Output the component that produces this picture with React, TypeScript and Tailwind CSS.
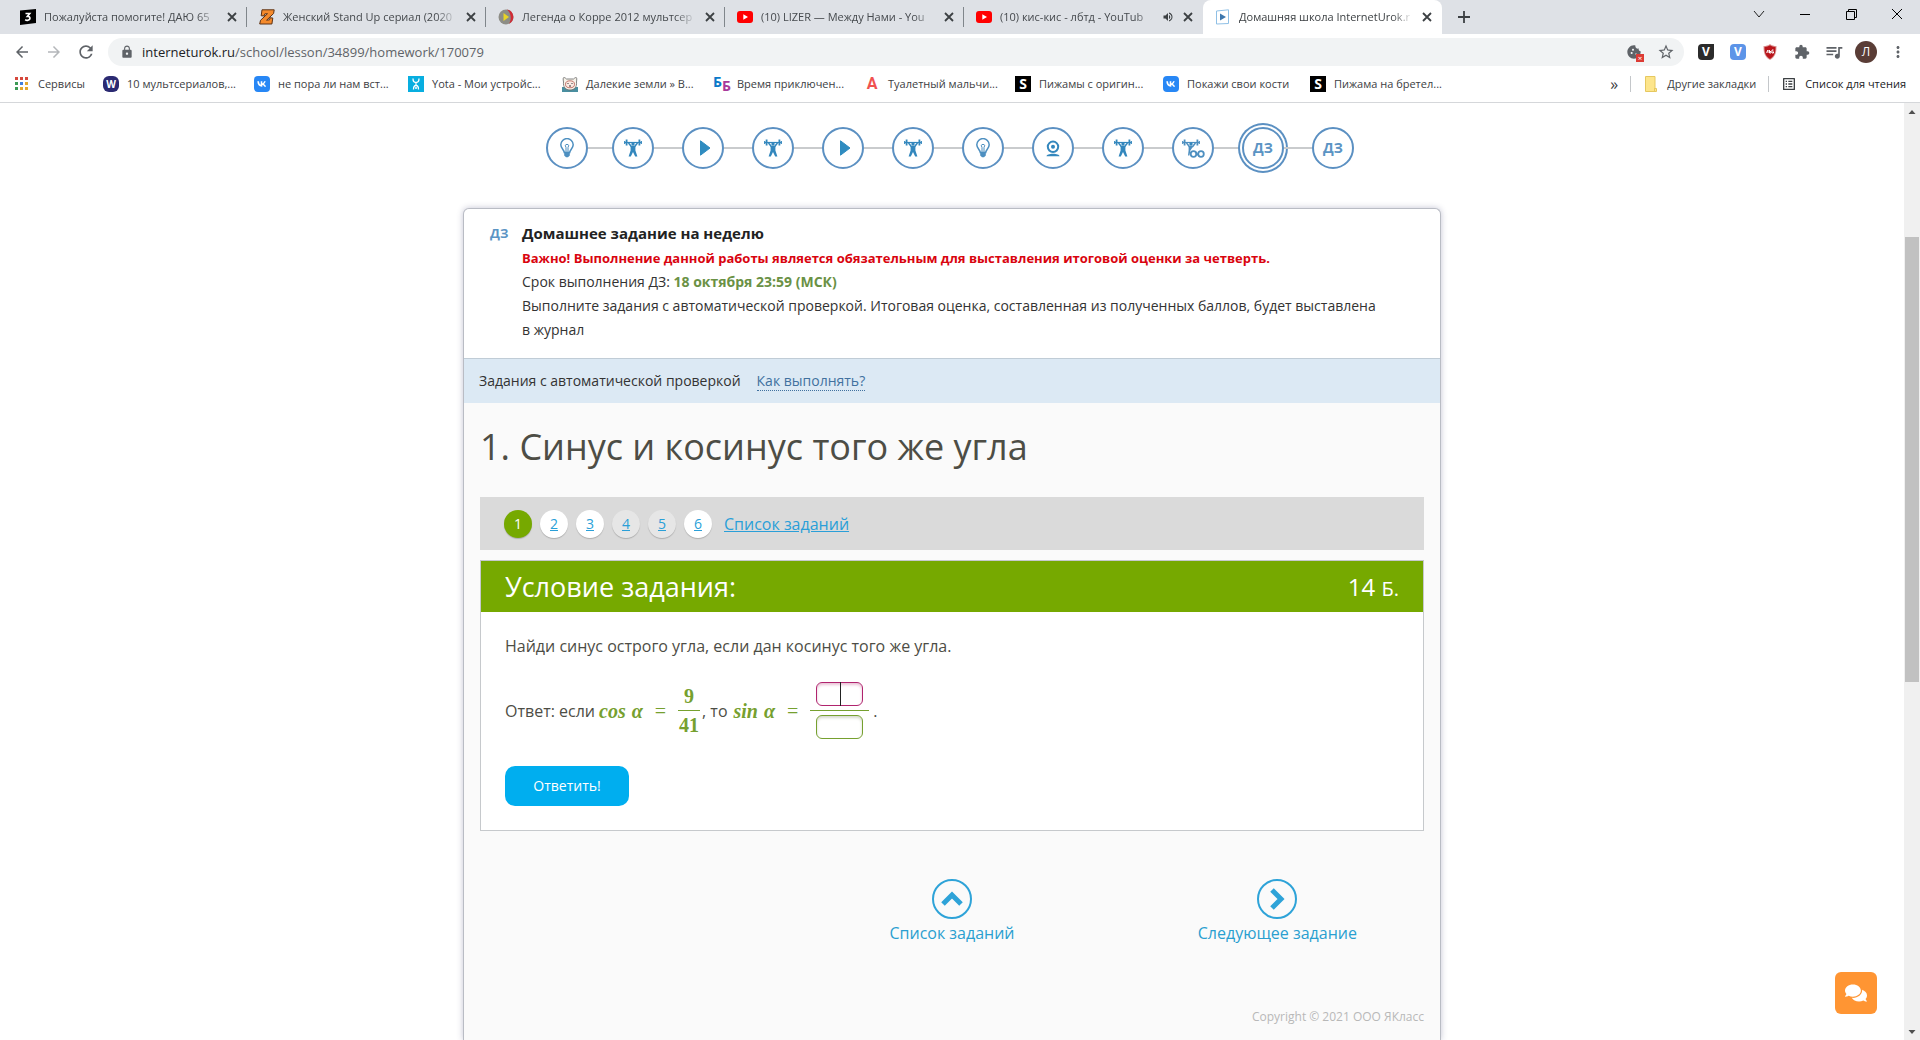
import type { ReactNode } from 'react'
import clsx from 'clsx'
import { FaComments } from 'react-icons/fa'
import {
  MdArrowBack,
  MdArrowForward,
  MdCookie,
  MdExtension,
  MdLock,
  MdMoreVert,
  MdOutlineListAlt,
  MdQueueMusic,
  MdRefresh,
  MdStarBorder,
  MdVolumeUp,
} from 'react-icons/md'

interface Tab {
  title: string
  icon: ReactNode
  active?: boolean
  audible?: boolean
}

interface Bookmark {
  title: string
  icon: ReactNode
  width: string
}

type StepKind = 'bulb' | 'train' | 'play' | 'webcam' | 'trainExtra' | 'homework'

/* ---------- favicons ---------- */

function YoutubeIcon() {
  return (
    <svg viewBox="0 0 16 16" className="size-4">
      <rect y="2" width="16" height="12" rx="3" fill="#f00" />
      <path d="M6.3 5.3 11 8l-4.7 2.7z" fill="#fff" />
    </svg>
  )
}

function ZnanijaIcon() {
  return (
    <svg viewBox="0 0 16 16" className="size-4">
      <path d="M0 1.500 16 0v14L0 16z" fill="#000" />
      <path d="M5.500 4.500h4.200L7.500 7.300c3.300-.3 3.200 4.200-.2 4-1 0-1.600-.3-2.100-.7" fill="none" stroke="#fff" strokeWidth="1.700" />
    </svg>
  )
}

function ZetIcon() {
  return (
    <svg viewBox="0 0 16 16" className="size-4">
      <path d="M3 .8h12.200l-.6 3.700-7 6.700 3-.4.400-2 2.800.2-.9 6H.7l.8-3.700 7-6.600-2.700.2-.6 2-3-.1z" fill="#f58a2c" stroke="#5c3216" />
    </svg>
  )
}

function KorraIcon() {
  return (
    <svg viewBox="0 0 16 16" className="size-4">
      <circle cx="8" cy="8" r="7.500" fill="#8d8d86" />
      <path d="M9 .6a7.500 7.500 0 0 1 2 14.200C14 10 13 4 9 .6z" fill="#d12b35" />
      <path d="M5.500 4 11 8l-5.500 4z" fill="#e8d425" />
    </svg>
  )
}

function UrokIcon() {
  return (
    <svg viewBox="0 0 16 16" className="size-4">
      <path d="m1.500 2 12-1.200v13.700L1.500 15z" fill="#fff" stroke="#8fc0e6" />
      <path d="M5 4.500 11 8l-6 3.500z" fill="#3d77ad" />
    </svg>
  )
}

function AppsIcon() {
  const colors = ['#d6483c', '#d6483c', '#d6483c', '#3c9a55', '#3f7fe0', '#e3a72f', '#3c9a55', '#e3a72f', '#e3a72f']
  return (
    <svg viewBox="0 0 16 16" className="size-4">
      {colors.map((fill, i) => (
        <rect key={i} x={1 + (i % 3) * 5} y={1 + Math.floor(i / 3) * 5} width="3" height="3" fill={fill} />
      ))}
    </svg>
  )
}

function VkIcon() {
  return (
    <svg viewBox="0 0 16 16" className="size-4">
      <rect width="16" height="16" rx="4" fill="#2787f5" />
      <path
        d="M2.800 5.200h1.700c.1 2 .9 3.200 1.700 3.500V5.200h1.600v2.100c.8-.1 1.500-1.100 1.800-2.100h1.600c-.3 1.200-1 2.100-1.800 2.600.9.400 1.700 1.300 2.200 2.800H9.900c-.4-1-1.100-1.700-2.100-1.800v1.800c-3 .2-4.900-1.700-5-5.400z"
        fill="#fff"
        transform="translate(.5 .1)"
      />
    </svg>
  )
}

function YotaIcon() {
  return (
    <svg viewBox="0 0 16 16" className="size-4">
      <rect width="16" height="16" fill="#08aee0" />
      <path d="M5 2.500c0 3 1 4 3 4s3-1 3-4M8 6.500v3M5.500 13.500c0-2.500 1-4 2.500-4s2.500 1.500 2.500 4" fill="none" stroke="#fff" strokeWidth="1.300" />
      <circle cx="8" cy="12" r="1" fill="#fff" />
    </svg>
  )
}

function FarLandsIcon() {
  return (
    <svg viewBox="0 0 16 16" className="size-4">
      <rect y="11" width="16" height="5" fill="#4a8fa0" />
      <path d="M1.500 6C1 3 1 1.500 2 1.500S4.500 3 4.500 3h7s1.500-1.500 2.500-1.500.8 1.500.5 4.500c.5 5-2 8-6.500 8s-7-3-6.500-8z" fill="#f7f3ea" stroke="#666" strokeWidth=".8" />
      <ellipse cx="8" cy="8.300" rx="4.500" ry="3.500" fill="#fbe9e2" stroke="#b5584c" strokeWidth=".8" />
      <path d="M5.500 7.500h1M9.500 7.500h1M7 10h2" stroke="#333" />
    </svg>
  )
}

function BbIcon() {
  return (
    <span className="flex size-4 text-sm leading-3 font-bold">
      <span className="text-[#0a79c9]">Б</span>
      <span className="pt-1 text-[#a83a9a]">Б</span>
    </span>
  )
}

function LetterIcon({ children, className }: { children: string; className: string }) {
  return (
    <span className={clsx('flex size-4 items-center justify-center leading-4', className)}>{children}</span>
  )
}

function FolderIcon() {
  return (
    <svg viewBox="0 0 16 16" className="size-4">
      <path d="M2.500.5h9.500v12h1.500v3h-11z" fill="#fde58b" stroke="#e6c860" />
      <path d="M11.500 12v3.500" stroke="#e6c860" />
    </svg>
  )
}

function ShieldIcon() {
  return (
    <svg viewBox="0 0 16 16" className="size-4">
      <path d="M8 0c2 1.500 4 2 6.500 2 0 6-.5 10.500-6.500 14C2 12.500 1.500 8 1.500 2 4 2 6 1.500 8 0z" fill="#dc9a98" />
      <path d="M8 1.200c1.700 1.200 3.500 1.700 5.500 1.700 0 5.300-.6 9-5.500 12-4.900-3-5.500-6.700-5.500-12 2 0 3.800-.5 5.500-1.700z" fill="#b9151b" />
      <path d="M4.500 8.700 6 6v3M7.500 6v3h1.500V7.500H7.500M11.500 6H10v3h1.500V7.500" fill="none" stroke="#fff" />
    </svg>
  )
}

/* ---------- lesson step icons ---------- */

function BulbIcon() {
  return (
    <svg viewBox="0 0 20 20" className="size-5" fill="none" stroke="#4d8fc0">
      <path d="M7.300 14.500C7.200 11.800 3.800 10.300 3.800 6.800a6.200 6.200 0 0 1 12.400 0c0 3.500-3.400 5-3.500 7.700z" strokeWidth="1.500" />
      <path d="M9 14V9.500L8.200 7.300 10 6.200l1.800 1.100-.8 2.200V14" />
      <path d="M7.200 14.500h5.600v3L11 19.300H9l-1.800-1.800z" fill="#4d8fc0" stroke="none" />
    </svg>
  )
}

function LifterShape() {
  return (
    <>
      <path d="M1.500 4.500h17" strokeWidth="1.200" />
      <path d="M3.600 1.500v6M16.400 1.500v6" strokeWidth="1.800" />
      <path d="M1.700 3v3M18.300 3v3" strokeWidth="1.200" />
      <path d="m5.500 5 2.800 3.500h3.400L14.500 5" strokeWidth="1.500" />
      <circle cx="10" cy="6" r="1.700" fill="#3387bd" stroke="none" />
    </>
  )
}

function TrainIcon() {
  return (
    <svg viewBox="0 0 20 20" className="size-5" fill="none" stroke="#3387bd">
      <LifterShape />
      <path d="M7.600 8h4.800v4.500l2 6h-2.200L10 14l-2.200 4.500H5.600l2-6z" fill="#3387bd" stroke="none" />
    </svg>
  )
}

function TrainExtraIcon() {
  return (
    <svg viewBox="0 0 24 20" className="h-5 w-6" fill="none" stroke="#4d8fc0">
      <LifterShape />
      <path d="M7.600 8h4.800l-3 4.500-1 5H7l.6-5z" fill="#4d8fc0" stroke="none" />
      <circle cx="12.500" cy="16" r="2.800" strokeWidth="1.800" />
      <circle cx="20" cy="16" r="2.800" strokeWidth="1.800" />
      <path d="m14.500 14 3.500 4" strokeWidth="1.500" />
    </svg>
  )
}

function PlayIcon() {
  return (
    <svg viewBox="0 0 20 20" className="size-5">
      <path d="M7.500 2.800v14.400L17 10z" fill="#2f8cc0" stroke="#2f8cc0" strokeLinejoin="round" />
    </svg>
  )
}

function WebcamIcon() {
  return (
    <svg viewBox="0 0 20 20" className="size-5" fill="none" stroke="#3387bd">
      <circle cx="10" cy="8.800" r="5.200" strokeWidth="2" />
      <circle cx="10" cy="8.800" r="2" fill="#3387bd" stroke="none" />
      <path d="M3.500 18.300c0-1.600 3-2.600 6.500-2.600s6.500 1 6.500 2.600z" fill="#3387bd" stroke="none" />
    </svg>
  )
}

const stepIcons: Record<StepKind, ReactNode> = {
  bulb: <BulbIcon />,
  train: <TrainIcon />,
  play: <PlayIcon />,
  webcam: <WebcamIcon />,
  trainExtra: <TrainExtraIcon />,
  homework: 'ДЗ',
}

/* ---------- data ---------- */

const tabs: Tab[] = [
  { title: 'Пожалуйста помогите! ДАЮ 65', icon: <ZnanijaIcon /> },
  { title: 'Женский Stand Up сериал (2020', icon: <ZetIcon /> },
  { title: 'Легенда о Корре 2012 мультсер', icon: <KorraIcon /> },
  { title: '(10) LIZER — Между Нами - You', icon: <YoutubeIcon /> },
  { title: '(10) кис-кис - лбтд - YouTub', icon: <YoutubeIcon />, audible: true },
  { title: 'Домашняя школа InternetUrok.r', icon: <UrokIcon />, active: true },
]

const bookmarks: Bookmark[] = [
  { title: 'Сервисы', icon: <AppsIcon />, width: 'w-[89px]' },
  { title: '10 мультсериалов,...', icon: <LetterIcon className="rounded-md bg-[#2b2a72] text-[10px] font-bold text-white">W</LetterIcon>, width: 'w-[151px]' },
  { title: 'не пора ли нам вст...', icon: <VkIcon />, width: 'w-[154px]' },
  { title: 'Yota - Мои устройс...', icon: <YotaIcon />, width: 'w-[154px]' },
  { title: 'Далекие земли » В...', icon: <FarLandsIcon />, width: 'w-[151px]' },
  { title: 'Время приключен...', icon: <BbIcon />, width: 'w-[151px]' },
  { title: 'Туалетный мальчи...', icon: <LetterIcon className="font-[Roboto,sans-serif] text-base font-bold text-[#f0524f]">A</LetterIcon>, width: 'w-[151px]' },
  { title: 'Пижамы с оригин...', icon: <LetterIcon className="bg-black text-sm font-bold text-white">S</LetterIcon>, width: 'w-[148px]' },
  { title: 'Покажи свои кости', icon: <VkIcon />, width: 'w-[147px]' },
  { title: 'Пижама на бретел...', icon: <LetterIcon className="bg-black text-sm font-bold text-white">S</LetterIcon>, width: 'w-[151px]' },
]

const steps: StepKind[] = [
  'bulb', 'train', 'play', 'train', 'play', 'train',
  'bulb', 'webcam', 'train', 'trainExtra', 'homework', 'homework',
]
const currentStep = 10

const tasks = [
  { id: 1, style: 'bg-[#76a900] text-white' },
  { id: 2, style: 'bg-white text-[#2a9fd8] underline' },
  { id: 3, style: 'bg-white text-[#2a9fd8] underline' },
  { id: 4, style: 'bg-[#e6e6e6] text-[#2a9fd8] underline' },
  { id: 5, style: 'bg-[#e6e6e6] text-[#2a9fd8] underline' },
  { id: 6, style: 'bg-white text-[#2a9fd8] underline' },
]

/* ---------- browser chrome ---------- */

function TabStrip() {
  return (
    <div className="flex h-[34px] bg-[#dee1e6] pl-2">
      {tabs.map((tab, i) => (
        <div
          key={tab.title}
          className={clsx(
            'flex w-[239px] items-center pl-3',
            tab.active && 'rounded-t-lg bg-white text-[#3c4043]'
          )}
        >
          {tab.icon}
          <span className="ml-2 flex-1 text-[11px] whitespace-nowrap [mask-image:linear-gradient(to_right,black_88%,transparent)]">
            {tab.title}
          </span>
          {tab.audible && <MdVolumeUp className="ml-2 size-3 text-[#3c4043]" />}
          <button type="button" aria-label="Закрыть вкладку" className="mx-1.5 flex size-4 items-center justify-center">
            <svg viewBox="0 0 10 10" className="size-2.5" stroke="#3c4043" strokeWidth="1.800">
              <path d="m1 1 8 8M9 1 1 9" />
            </svg>
          </button>
          <span className={clsx('h-5 w-px', i < 4 && 'bg-[#80868b]')} />
        </div>
      ))}
      <button type="button" aria-label="Новая вкладка" className="ml-2 flex w-7 items-center justify-center">
        <svg viewBox="0 0 12 12" className="size-3" stroke="#3c4043" strokeWidth="1.800">
          <path d="M6 0v12M0 6h12" />
        </svg>
      </button>
      <div className="ml-auto flex h-7">
        <button type="button" aria-label="Поиск вкладок" className="flex w-[46px] items-center justify-center">
          <svg viewBox="0 0 12 12" className="size-3" fill="none" stroke="#222">
            <path d="m1 3 5 6 5-6" />
          </svg>
        </button>
        <button type="button" aria-label="Свернуть" className="flex w-[46px] items-center justify-center">
          <span className="h-px w-2.5 bg-black" />
        </button>
        <button type="button" aria-label="Восстановить" className="flex w-[46px] items-center justify-center">
          <svg viewBox="0 0 11 11" className="size-[11px]" fill="none" stroke="#000">
            <path d="M.5 2.500h8v8h-8zM2.500 2.500v-2h8v8h-2" />
          </svg>
        </button>
        <button type="button" aria-label="Закрыть" className="flex w-[46px] items-center justify-center">
          <svg viewBox="0 0 12 12" className="size-3" stroke="#000">
            <path d="m1 1 10 10M11 1 1 11" />
          </svg>
        </button>
      </div>
    </div>
  )
}

function ToolButton({ label, children }: { label: string; children: ReactNode }) {
  return (
    <button type="button" aria-label={label} className="flex h-7 w-8 items-center justify-center text-[#5f6368]">
      {children}
    </button>
  )
}

function Toolbar() {
  return (
    <div className="flex items-center px-1.5 pt-1">
      <ToolButton label="Назад"><MdArrowBack className="size-[18px]" /></ToolButton>
      <ToolButton label="Вперёд"><MdArrowForward className="size-[18px] text-[#b4b7ba]" /></ToolButton>
      <ToolButton label="Обновить"><MdRefresh className="size-5" /></ToolButton>
      <div className="ml-1.5 flex h-7 flex-1 items-center rounded-full bg-[#f1f3f4] pr-0.5 pl-3">
        <MdLock className="size-3.5 text-[#5f6368]" />
        <div className="ml-2 flex-1 pt-px text-[13px] text-[#5f6368]">
          <span className="text-[#202124]">interneturok.ru</span>/school/lesson/34899/homework/170079
        </div>
        <ToolButton label="Файлы cookie">
          <span className="relative">
            <MdCookie className="size-4" />
            <span className="absolute -right-0.5 -bottom-0.5 flex size-2 items-center justify-center bg-[#dc3b34] text-[8px] leading-none text-white">
              ×
            </span>
          </span>
        </ToolButton>
        <ToolButton label="Добавить в закладки"><MdStarBorder className="size-[18px]" /></ToolButton>
      </div>
      <div className="ml-1.5 flex">
        <ToolButton label="Расширение V">
          <LetterIcon className="rounded-sm rounded-tr-none bg-[#2b2b2b] text-xs font-bold text-white">V</LetterIcon>
        </ToolButton>
        <ToolButton label="Расширение V, синее">
          <LetterIcon className="rounded-sm bg-[#5c94e8] text-xs font-bold text-white">V</LetterIcon>
        </ToolButton>
        <ToolButton label="Блокировщик рекламы"><ShieldIcon /></ToolButton>
        <ToolButton label="Расширения"><MdExtension className="size-4" /></ToolButton>
        <ToolButton label="Управление медиа"><MdQueueMusic className="size-5" /></ToolButton>
        <ToolButton label="Профиль">
          <span className="flex size-[22px] items-center justify-center rounded-full bg-[#5a3d36] text-xs text-white">Л</span>
        </ToolButton>
        <ToolButton label="Меню"><MdMoreVert className="size-[18px]" /></ToolButton>
      </div>
    </div>
  )
}

function BookmarksBar() {
  return (
    <div className="flex h-[37px] items-center border-b border-[#d5d7da] px-3.5 text-[11px] text-[#3c4043]">
      {bookmarks.map((b) => (
        <a key={b.title} href="#" className={clsx('flex items-center gap-2 whitespace-nowrap', b.width)}>
          {b.icon}
          {b.title}
        </a>
      ))}
      <button type="button" aria-label="Ещё закладки" className="ml-auto text-base leading-4">»</button>
      <span className="mx-3 h-4 w-px bg-[#c4c7ca]" />
      <a href="#" className="flex items-center gap-2">
        <FolderIcon />
        Другие закладки
      </a>
      <span className="mx-3 h-4 w-px bg-[#c4c7ca]" />
      <a href="#" className="flex items-center gap-2 text-[#202124]">
        <MdOutlineListAlt className="size-4 text-[#3c4043]" />
        Список для чтения
      </a>
    </div>
  )
}

function Scrollbar() {
  return (
    <div className="flex w-4 flex-col items-center bg-[#f0f0f0]">
      <svg viewBox="0 0 16 16" className="size-4"><path d="M4.500 11h7L8 7z" fill="#505050" /></svg>
      <div className="flex w-full flex-1 flex-col px-px">
        <div className="grow-[118]" />
        <div className="grow-[444] bg-[#c1c1c1]" />
        <div className="grow-[341]" />
      </div>
      <svg viewBox="0 0 16 16" className="size-4"><path d="M4.500 6h7L8 10z" fill="#505050" /></svg>
    </div>
  )
}

/* ---------- lesson page ---------- */

function LessonSteps() {
  return (
    <nav aria-label="Этапы урока" className="flex h-[90px] items-center justify-center pr-1 text-sm font-bold text-[#5b94c4]">
      {steps.map((kind, i) => (
        <div key={i} className="flex items-center">
          {i > 0 && <span className={clsx('h-0.5 bg-[#c9cbcd]', i === 1 ? 'w-6' : 'w-7')} />}
          <a
            href="#"
            aria-label={`Этап ${i + 1}`}
            className={clsx(
              'flex size-[42px] items-center justify-center rounded-full border-2 border-[#5b90c2] bg-white',
              i === currentStep && 'shadow-[0_0_0_2px_white,0_0_0_4px_#5b90c2]'
            )}
          >
            {stepIcons[kind]}
          </a>
        </div>
      ))}
    </nav>
  )
}

function HomeworkHeader() {
  return (
    <header className="flex gap-3.5 px-[26px] pt-3 pb-4 text-sm leading-6 text-[#333]">
      <span className="w-[18px] text-[13px] leading-6 font-bold whitespace-nowrap text-[#5b94c4]">ДЗ</span>
      <div>
        <h2 className="text-[15px] leading-6 font-bold text-[#222]">Домашнее задание на неделю</h2>
        <p className="pt-px text-[13px] leading-6 font-bold text-[#d9040f]">
          Важно! Выполнение данной работы является обязательным для выставления итоговой оценки за четверть.
        </p>
        <p>
          Срок выполнения ДЗ: <b className="text-[#6a9145]">18 октября 23:59 (МСК)</b>
        </p>
        <p>
          Выполните задания с автоматической проверкой. Итоговая оценка, составленная из полученных баллов, будет выставлена
          <br />в журнал
        </p>
      </div>
    </header>
  )
}

function Fraction({ top, bottom }: { top: ReactNode; bottom: ReactNode }) {
  return (
    <span className="flex flex-col text-center">
      <span className="border-b border-[#76a02f] pb-1">{top}</span>
      <span className="pt-1">{bottom}</span>
    </span>
  )
}

function Equation({ name, children }: { name: string; children: ReactNode }) {
  return (
    <span className="ml-1 flex items-center font-['Liberation_Serif',serif] text-xl leading-5 font-bold text-[#76a02f]">
      <i className="mr-1.5">{name}</i>
      <i>α</i>
      <span className="mx-3 font-normal">=</span>
      {children}
    </span>
  )
}

function Answer() {
  const input = 'block h-6 w-[47px] rounded-md border bg-white text-center text-base outline-none'
  return (
    <div className="flex items-center text-base text-[#4d4d45]">
      <span>Ответ: если</span>
      <Equation name="cos">
        <Fraction top="9" bottom={<span className="px-px">41</span>} />
      </Equation>
      <span className="mx-0.5">, то</span>
      <Equation name="sin">
        <Fraction
          top={
            <span className="relative block px-1.5">
              <input
                type="text"
                aria-label="Числитель"
                className={clsx(input, 'border-[#b0246e] shadow-[inset_0_2px_3px_#e9c3d6]')}
              />
              <span className="absolute inset-y-0 left-1/2 w-px bg-[#222]" />
            </span>
          }
          bottom={
            <span className="block px-1.5">
              <input
                type="text"
                aria-label="Знаменатель"
                className={clsx(input, 'border-[#76a02f] shadow-[inset_0_2px_3px_#d5d9cc]')}
              />
            </span>
          }
        />
      </Equation>
      <span className="ml-1">.</span>
    </div>
  )
}

function TaskCard() {
  return (
    <section className="border border-[#c6c9cc] bg-white">
      <div className="flex items-center justify-between bg-[#76a900] px-6 text-white">
        <h3 className="text-[27px] leading-[51px]">Условие задания:</h3>
        <span className="text-2xl">
          14 <span className="text-xl">Б.</span>
        </span>
      </div>
      <div className="px-6 pt-[22px] pb-6 text-base text-[#4d4d45]">
        <p className="mb-6 leading-6">Найди синус острого угла, если дан косинус того же угла.</p>
        <Answer />
        <button type="button" className="mt-[27px] h-10 w-[124px] rounded-[10px] bg-[#00aeef] text-sm text-white">
          Ответить!
        </button>
      </div>
    </section>
  )
}

function NavLink({ label, path }: { label: string; path: string }) {
  return (
    <a href="#" className="flex flex-col items-center text-base leading-6 text-[#2a9fd0]">
      <svg viewBox="0 0 40 40" className="mb-0.5 size-10" fill="none" stroke="#2ea3d8">
        <circle cx="20" cy="20" r="19" strokeWidth="2" />
        <path d={path} strokeWidth="5" />
      </svg>
      {label}
    </a>
  )
}

function ExercisePage() {
  return (
    <div className="flex flex-1 flex-col bg-[#fafafa] px-4">
      <h1 className="pt-5 text-[36px] leading-[48px] text-[#4d4d45]">1. Синус и косинус того же угла</h1>
      <nav aria-label="Задания" className="mt-[26px] mb-2.5 flex h-[53px] items-center gap-2 bg-[#dadada] pl-6">
        {tasks.map((task) => (
          <a
            key={task.id}
            href="#"
            className={clsx(
              'flex size-7 items-center justify-center rounded-full text-sm shadow-[0_1px_1px_rgba(0,0,0,0.2)]',
              task.style
            )}
          >
            {task.id}
          </a>
        ))}
        <a href="#" className="ml-1 text-base text-[#2a9fd8] underline">Список заданий</a>
      </nav>
      <TaskCard />
      <div className="-mx-4 mt-12 grid grid-cols-3">
        <span />
        <NavLink label="Список заданий" path="m11 25 9-9 9 9" />
        <NavLink label="Следующее задание" path="m15 11 9 9-9 9" />
      </div>
      <p className="mt-16 text-right text-xs text-[#b8b8b8]">Copyright © 2021 ООО ЯКласс</p>
    </div>
  )
}

export default function App() {
  return (
    <div className="flex h-screen flex-col overflow-hidden bg-white font-['Open_Sans',sans-serif] text-xs text-[#45494d]">
      <TabStrip />
      <Toolbar />
      <BookmarksBar />
      <div className="relative flex min-h-0 flex-1">
        <div className="flex min-w-0 flex-1 flex-col">
          <LessonSteps />
          <main className="mx-auto mt-[15px] flex w-full max-w-[978px] flex-1 flex-col rounded-t-md border border-b-0 border-[#b9bcc4] bg-white shadow-[0_0_6px_rgba(60,60,110,0.3)]">
            <HomeworkHeader />
            <div className="border-t border-[#c0ccd6] bg-[#dce9f4] px-[15px] text-sm leading-[44px] text-[#333]">
              Задания с автоматической проверкой
              <a href="#" className="ml-4 border-b border-dotted border-[#41719f] text-[#41719f]">Как выполнять?</a>
            </div>
            <ExercisePage />
          </main>
        </div>
        <Scrollbar />
        <button
          type="button"
          aria-label="Открыть чат"
          className="absolute right-[43px] bottom-[26px] flex size-[42px] items-center justify-center rounded-md bg-[#ff9533] text-white"
        >
          <FaComments className="size-[22px]" />
        </button>
      </div>
    </div>
  )
}
